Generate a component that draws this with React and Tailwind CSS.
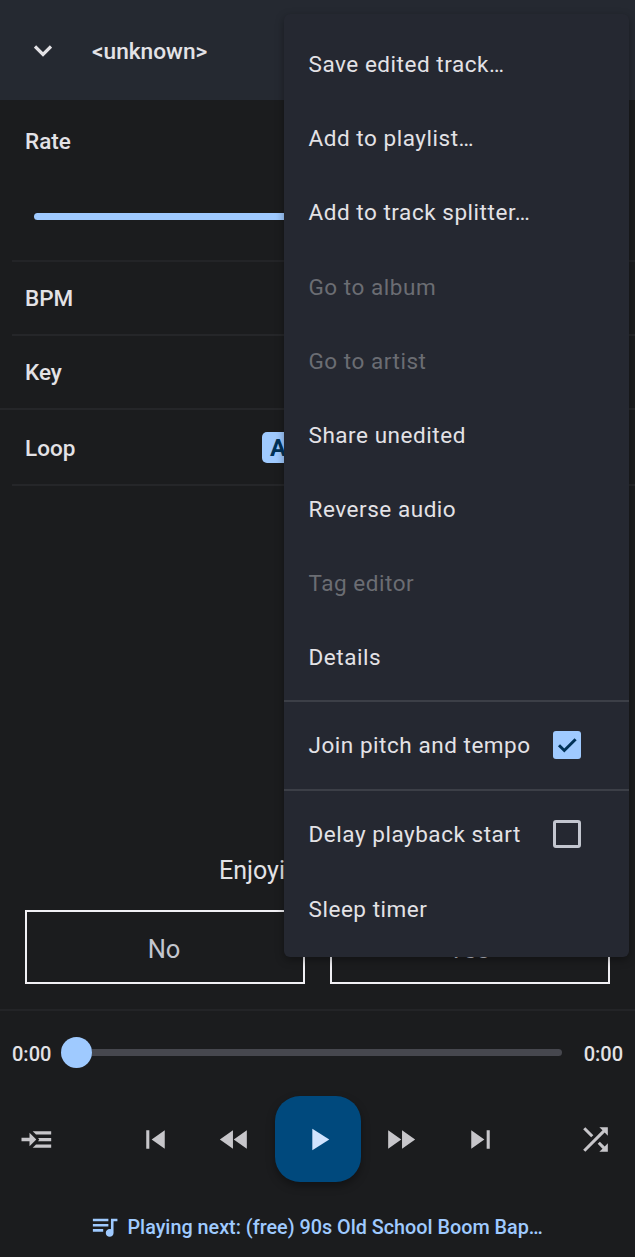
import React, { useState } from 'react';
import {
  MdFastForward,
  MdFastRewind,
  MdPlayArrow,
  MdQueueMusic,
  MdShuffle,
  MdSkipNext,
  MdSkipPrevious,
} from 'react-icons/md';

const menuItems = [
  { label: 'Save edited track…' },
  { label: 'Add to playlist…' },
  { label: 'Add to track splitter…' },
  { label: 'Go to album', disabled: true },
  { label: 'Go to artist', disabled: true },
  { label: 'Share unedited' },
  { label: 'Reverse audio' },
  { label: 'Tag editor', disabled: true },
  { label: 'Details' },
];

const MenuItem = ({ label, disabled, children }) => (
  <button
    disabled={disabled}
    className={`flex h-[74.2px] w-full shrink-0 items-center justify-between pl-[25px] pr-[48px] text-left text-[22.5px] tracking-[0.54px] ${
      disabled ? 'text-[#6b6d73]' : 'text-[#e3e2e6]'
    }`}
  >
    <span className="whitespace-nowrap pt-[1.5px]">{label}</span>
    {children}
  </button>
);

const Checkbox = ({ checked }) => (
  <span
    className={`flex size-7 shrink-0 items-center justify-center rounded-[3px] ${
      checked ? 'bg-[#9fcaff] text-[#003258]' : 'border-3 border-[#c3c6cf]'
    }`}
  >
    {checked && (
      <svg viewBox="0 0 28 28" className="size-7" fill="none" stroke="currentColor" strokeWidth="3">
        <path d="M6 14.2l5.3 5.3L22.6 8.2" />
      </svg>
    )}
  </span>
);

const OverflowMenu = () => {
  const [joined, setJoined] = useState(true);
  const [delayed, setDelayed] = useState(false);

  return (
    <div className="absolute left-[283.5px] top-[14px] flex h-[943px] w-[345.5px] flex-col rounded-md bg-[#252831] pt-[13px] shadow-[0_3px_8px_rgba(0,0,0,0.35)]">
      {menuItems.map((item) => (
        <MenuItem key={item.label} {...item} />
      ))}
      <div onClick={() => setJoined(!joined)} className="mt-[5px] border-y-2 border-[#3c3f47] py-[6.5px]">
        <MenuItem label="Join pitch and tempo">
          <Checkbox checked={joined} />
        </MenuItem>
      </div>
      <div onClick={() => setDelayed(!delayed)} className="pt-[6.5px]">
        <MenuItem label="Delay playback start">
          <Checkbox checked={delayed} />
        </MenuItem>
      </div>
      <MenuItem label="Sleep timer" />
    </div>
  );
};

const PlayNextIcon = () => (
  <svg viewBox="0 0 37 37" className="size-[37px]" fill="currentColor">
    <path d="M3.5 16.8h8v-5l6.8 6.7-6.8 6.7v-5h-8z" />
    <path d="M14.7 10.3h18.5v3.2H18z" />
    <path d="M20 17h13.2v3.2H20l1.3-1.6z" />
    <path d="M18 23.6h15.2v3.2H14.7z" />
  </svg>
);

export default function App() {
  return (
    <div className="relative flex h-[1257px] w-[635px] flex-col overflow-hidden bg-[#1b1c1e] font-['Roboto',sans-serif] text-[#e3e2e6]">
      <header className="flex h-[100px] shrink-0 items-center gap-[40px] bg-[#252931] pl-[34px] pt-[3px]">
        <svg viewBox="0 0 18 12" className="mb-0.5 h-3 w-[18px]" fill="none" stroke="currentColor" strokeWidth="3.2">
          <path d="M1 1.5l8 8 8-8" />
        </svg>
        <h1 className="pt-0.5 text-[22.7px] font-medium">&lt;unknown&gt;</h1>
      </header>

      <section className="flex flex-col text-[22.5px] font-medium">
        <div className="ml-3 h-[162px] border-b-2 border-[#232427] pl-[13px] pt-[25px]">
          <div className="h-[33px]">Rate</div>
          <div className="ml-[9px] mr-[34px] mt-[55px] h-[7px] rounded-full bg-[#9fcaff]" />
        </div>
        <div className="ml-3 flex h-[74px] items-center border-b-2 border-[#252629] pl-[13px] pt-0.5">BPM</div>
        <div className="flex h-[74px] items-center border-b-2 border-[#252629] pl-[25px] pt-0.5">Key</div>
        <div className="ml-3 flex h-[76px] items-center border-b-2 border-[#252629] pl-[13px]">
          <span className="w-[237px] pt-1">Loop</span>
          <span className="flex h-[31px] w-[62px] items-center rounded-[5px] bg-[#9fcaff] pl-2 pt-0.5 text-[24px] font-bold text-[#003258]">
            A
          </span>
        </div>
      </section>

      <section className="mt-auto px-[25px] pb-[25px] text-[25px]">
        <p className="h-[58px] whitespace-nowrap pl-[194px]">Enjoying the app?</p>
        <div className="flex gap-[25px]">
          <button className="h-[74.5px] flex-1 border-2 border-[#f1f0f4] pr-0.5 pt-1 text-[25.5px] text-[#c3c6cf]">
            No
          </button>
          <button className="h-[74.5px] flex-1 border-2 border-[#f1f0f4] pr-0.5 pt-1 text-[25.5px] text-[#c3c6cf]">
            Yes
          </button>
        </div>
      </section>

      <footer className="flex h-[248px] shrink-0 flex-col border-t-2 border-[#232427]">
        <div className="mt-[25px] flex h-8 items-center px-3 text-[20px] font-medium">
          <span className="w-[49px] pt-1">0:00</span>
          <div className="flex flex-1 items-center">
            <span className="size-[31px] rounded-full bg-[#9fcaff]" />
            <span className="h-[7px] w-[470px] rounded-r-full bg-[#46474e]" />
          </div>
          <span className="pt-1">0:00</span>
        </div>

        <div className="mt-[28px] flex h-[86px] items-center pl-[17.5px] text-[37px] text-[#c7c6ca]">
          <PlayNextIcon />
          <MdSkipPrevious className="ml-[82.5px]" />
          <MdFastRewind className="ml-[42px]" />
          <button className="ml-[22px] flex size-[86px] items-center justify-center rounded-[25px] bg-[#00497d] text-[#d1e4ff] shadow-[0_4px_9px_rgba(0,0,0,0.35)]">
            <MdPlayArrow />
          </button>
          <MdFastForward className="ml-[21px]" />
          <MdSkipNext className="ml-[42.5px]" />
          <MdShuffle className="ml-[78px]" />
        </div>

        <div className="mt-[28px] flex h-8 items-center gap-[7.5px] pl-[89px] text-[19.8px] font-medium text-[#9fcaff]">
          <MdQueueMusic className="text-[31px]" />
          <span className="whitespace-nowrap pt-[3px]">Playing next: (free) 90s Old School Boom Bap…</span>
        </div>
      </footer>

      <OverflowMenu />
    </div>
  );
}
